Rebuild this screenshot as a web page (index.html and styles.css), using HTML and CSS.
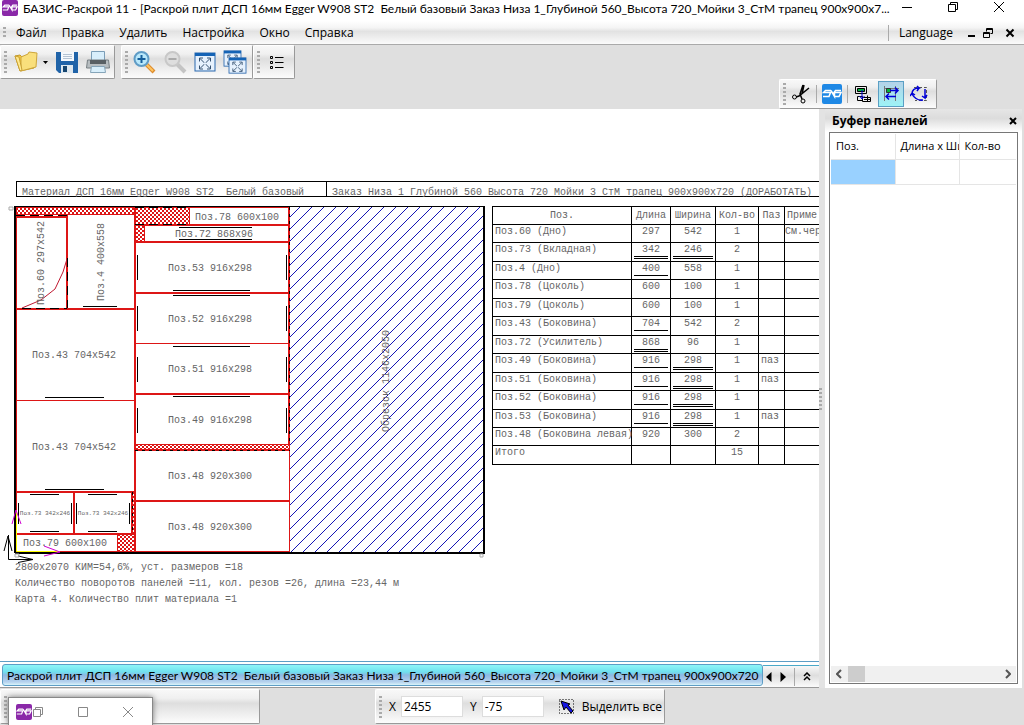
FILE: index.html
```html
<!DOCTYPE html>
<html lang="ru">
<head>
<meta charset="utf-8">
<title>БАЗИС-Раскрой 11</title>
<link rel="stylesheet" href="styles.css">
</head>
<body>
<svg class="defs" aria-hidden="true">
  <symbol id="logo" viewBox="0 0 20 20">
    <path d="M9 6.500H3.500L1.500 8.500H8.500L7 12.500H1M9 6.500l3.500 6V9M19 6.500H13.500L12 8.500H19L17 12.500H12.500" fill="none" stroke="#fff" stroke-width="1.500"/>
  </symbol>
  <symbol id="fit" viewBox="0 0 22 20">
    <rect x="1" y="1" width="20" height="18" fill="#e6f1fd" stroke="#2b68ae"/>
    <rect x="1" y="1" width="20" height="3" fill="#1463b5"/>
    <path d="M6 6.500l10 10M16 6.500l-10 10M5.500 9.500v-3.500h3.500M13 6h3.500v3.500M5.500 13.500v3.500h3.500M13 17h3.500v-3.500" fill="none" stroke="#34506f"/>
    <rect x="10" y="10.500" width="2" height="2" fill="#e6f1fd"/>
  </symbol>
</svg>

<header class="titlebar">
  <svg class="app-logo" viewBox="0 0 20 20"><use href="#logo"/></svg>
  <h1>БАЗИС-Раскрой 11 - [Раскрой плит ДСП 16мм Egger W908 ST2&nbsp; Белый базовый Заказ Низа 1_Глубиной 560_Высота 720_Мойки 3_СтМ трапец 900x900x7...</h1>
  <div class="window-buttons">
    <button aria-label="Свернуть"><svg width="12" height="12"><path d="M1 6.500h10" stroke="#000"/></svg></button>
    <button aria-label="Восстановить"><svg width="12" height="12" fill="none" stroke="#000"><path d="M1.500 3.500h7v7h-7zM3.500 3.500v-2h7v7h-2"/></svg></button>
    <button aria-label="Закрыть"><svg width="12" height="12"><path d="M1 1l10 10M11 1L1 11" stroke="#000"/></svg></button>
  </div>
</header>

<nav class="menubar">
  <span class="grip"></span>
  <button>Файл</button><button>Правка</button><button>Удалить</button><button>Настройка</button><button>Окно</button><button>Справка</button>
  <div class="menu-right">
    <button class="language">Language</button>
    <button class="mdi" aria-label="Свернуть окно"><svg width="10" height="10"><path d="M1 8h7" stroke="#000" stroke-width="2"/></svg></button>
    <button class="mdi" aria-label="Восстановить окно"><svg width="10" height="10" fill="none" stroke="#000"><path d="M.500 4.500h6v5h-6zM.500 5.500h6M3.500 3.500v-3h6v5h-2M3.500 1.500h6"/></svg></button>
    <button class="mdi" aria-label="Закрыть окно"><svg width="10" height="10"><path d="M1.500 1.500l7 7M8.500 1.500l-7 7" stroke="#000" stroke-width="2"/></svg></button>
  </div>
</nav>

<div class="toolbars">
  <div class="tool-row">
    <div class="toolbar">
      <span class="grip"></span>
      <button aria-label="Открыть"><svg width="24" height="24"><path d="M1 6l5-1 2 2 13-4-1 15L6 21z" fill="#f6c73f" stroke="#c39a2b"/><path d="M7 7l7-3 1-2 8 1-1 14L7 21z" fill="#f9df7c" stroke="#cda63c"/><path d="M1 6l4 1 3 13-2 1z" fill="#ffe98e" stroke="#c9a136"/></svg></button>
      <button class="drop" aria-label="Последние файлы"><svg width="5" height="3"><path d="M0 0h5L2.500 3z"/></svg></button>
      <button aria-label="Сохранить"><svg width="24" height="24"><path d="M1 2h22v21H4l-3-3z" fill="#2063a8"/><path d="M6 2h13v9H6z" fill="#f4f8fc"/><path d="M8 4.500h9M8 6.500h9M8 8.500h9" stroke="#b4c3d3"/><path d="M6 15h12v8H6z" fill="#dfe8ef"/><path d="M8 16h4v6H8z" fill="#17466f"/></svg></button>
      <button aria-label="Печать"><svg width="24" height="24"><path d="M5.500 1.500h13v10h-13z" fill="#d8eefb" stroke="#7b9db7"/><path d="M1.500 10h21l1 8H.500z" fill="#b7bdc0" stroke="#777f83"/><path d="M4 10h16v4H4z" fill="#596064"/><path d="M5.500 16.500h13l1 6h-15z" fill="#d9effb" stroke="#86a5b9"/></svg></button>
    </div>
    <div class="toolbar second">
      <span class="grip"></span>
      <button class="zoom-in" aria-label="Увеличить"><svg width="24" height="24"><path d="M14 14l8 8" stroke="#dd8b2d" stroke-width="4"/><path d="M14 14l7 7" stroke="#ffc560" stroke-width="2"/><circle cx="9.500" cy="9" r="7" fill="#b9e8fb" stroke="#5f9cc6" stroke-width="2"/><path d="M9.500 5v8M5.500 9h8" stroke="#155e9b" stroke-width="2"/></svg></button>
      <button aria-label="Уменьшить" disabled><svg width="24" height="24"><path d="M14 14l8 8" stroke="#c4c4c4" stroke-width="4"/><circle cx="9.500" cy="9" r="7" fill="#dedede" stroke="#c8c8c8" stroke-width="2"/><path d="M5.500 9h8" stroke="#aaa" stroke-width="2"/></svg></button>
      <button aria-label="Показать всё"><svg width="22" height="20"><use href="#fit"/></svg></button>
      <button aria-label="Показать все листы"><svg width="24" height="24"><use href="#fit" x="0" y="0" width="19" height="17"/><use href="#fit" x="5" y="7" width="19" height="17"/></svg></button>
    </div>
    <div class="toolbar third">
      <span class="grip"></span>
      <button aria-label="Список"><svg width="14" height="15" fill="none" stroke="#000"><path d="M.500 1.500h2v2h-2zM.500 6.500h2v2h-2zM.500 11.500h2v2h-2zM5 2.500h8.500M5 7.500h8.500M5 12.500h8.500"/></svg></button>
    </div>
  </div>
  <div class="tool-row lower">
    <div class="toolbar small">
      <span class="grip"></span>
      <button aria-label="Вырезать"><svg width="20" height="20" fill="none" stroke="#000"><path d="M12 1L9 10l2 5M18 4L8 12l-3 1M13 1l-2 9" stroke-width="1.500"/><circle cx="3.500" cy="13" r="2"/><circle cx="12" cy="17" r="2"/></svg></button>
      <i></i>
      <button aria-label="Базис"><svg class="blue-logo" viewBox="0 0 20 20"><use href="#logo"/></svg></button>
      <i></i>
      <button aria-label="Поместить в буфер"><svg width="18" height="18" fill="none" stroke="#000"><path d="M1.500 1.500h11v7h-11z"/><path d="M3.500 3.500h7v3h-7z" fill="#00b43c"/><path d="M3.500 11.500h5v4h-5zM8.500 12.500h8v4h-8zM13.500 10.500v6M10 14.500h6"/><path d="M8 5v9M5.500 11l2.500 3 2.500-3" stroke="#0000d8"/></svg></button>
      <button class="active" aria-label="Перемещение"><svg width="18" height="18" fill="none" stroke="#333"><path d="M2.500 1v15M13.500 1v15M3 3.500h14" stroke="#777"/><path d="M4.500 3.500h4v4h-4z" fill="#00b43c"/><path d="M8 5.500h8M13 2.500l3 3-3 3M14 11.500H4M7 8.500l-3 3 3 3" stroke="#0000d8" stroke-width="1.500"/></svg></button>
      <button aria-label="Поворот"><svg width="18" height="18" fill="none"><path d="M4 2.500h12.500v13H5" stroke="#555" stroke-dasharray="3 2"/><path d="M2 9q0-6 7-6l-2-2m2 2L7 6M15 4v9l-3-2m3 2l2-3M13 15q-7 1-11-6M0 11l2-3 3 2" stroke="#0000d8" stroke-width="1.500"/></svg></button>
    </div>
  </div>
</div>

<main class="workspace">
  <section class="document">
    <div class="canvas">
      <div class="sheet-head"><span>Материал ДСП 16мм Egger W908 ST2&nbsp; Белый базовый</span><span>Заказ Низа 1 Глубиной 560 Высота 720 Мойки 3 СтМ трапец 900x900x720 (ДОРАБОТАТЬ)</span></div>
      <div class="drawing">
        <svg class="plan" viewBox="0 206 490 348" width="490" height="348">
          <defs>
            <pattern id="blue" x="3" width="12" height="12" patternUnits="userSpaceOnUse"><path d="M0 12L12 0M-1 1L1-1M11 13L13 11" stroke="#1414b4"/></pattern>
            <pattern id="waste" width="4" height="4" patternUnits="userSpaceOnUse"><path d="M0 0h2v2H0zM2 2h2v2H2z" fill="#dd1616"/></pattern>
          </defs>
          <path d="M290 207h194v346H290z" fill="url(#blue)"/>
          <path d="M16 207h119v7H16zM135 207h54v17H135zM135 225h9v17h-9zM135 445h155v5H135zM132 492h3v42h-3zM117 534h18v18h-18z" fill="url(#waste)"/>
          <g fill="none" stroke="#dd1616" shape-rendering="crispEdges">
            <path d="M16.500 207.500h273v344h-273zM16 214.500h119M189.500 207v17M144.500 225v17M135 343.500h155M16 400.500h119M135 444.500h155M117.500 534v18"/>
            <path stroke-width="2" d="M16 309h119M67 215v94M132 492v42M135 450h155M289 207v238M135 207v345M135 225h155M135 242h155M135 293h155M135 394h155M135 501h155M16 492h119M74 492v42M16 534h119M16 217h51"/>
          </g>
          <path d="M22 308l19-8 14-11 8-17 4-13" fill="none" stroke="#c01830"/>
          <g fill="none" stroke="#000" shape-rendering="crispEdges">
            <path stroke-dasharray="9 5" d="M16 215.500h51M22 308.500h45M67.500 258v50M135 207.500h54M135 224.500h54"/>
            <path stroke-dasharray="3 4" d="M289.500 207v238M135 450.500h155M132.500 492v42"/>
          </g>
          <g fill="none" stroke="#000" shape-rendering="crispEdges">
            <path d="M83 306.500h34M179 227.500h73M179 239.500h73M173 290.500h77M173 295.500h77M173 346.500h77M173 396.500h77M137.500 255v25M286.500 255v25M137.500 306v25M286.500 306v25M137.500 357v25M286.500 357v25M137.500 408v25M286.500 408v25M45 397.500h59M45 489.500h59M30 494.500h29M30 531.500h29M88 494.500h29M88 531.500h29M18.500 503v21M71.500 503v21M76.500 503v21M129.500 503v21"/>
            <path d="M15 206.500h470"/>
            <path stroke-width="2" d="M15 206v347M484 206v348M15 553h470"/>
          </g>
          <path d="M16.500 510v41.500H60" fill="none" stroke="#ff0"/>
          <path d="M12 524l4-14 5 14M44 546l16 6-16 4" fill="none" stroke="#d000d0"/>
          <path d="M8.500 535v24.500H33M4 551l4-15 4 15M18 556l15 3.500-15 3" fill="none" stroke="#000"/>
          <path d="M9 207h4v3H9zM15 554h4v3h-4zM480 554h3v3h-3z" fill="none" stroke="#aaa"/>
          <g class="labels">
            <text x="237" y="220">Поз.78 600x100</text>
            <text x="214" y="237">Поз.72 868x96</text>
            <text x="210" y="271">Поз.53 916x298</text>
            <text x="210" y="322">Поз.52 916x298</text>
            <text x="210" y="372">Поз.51 916x298</text>
            <text x="210" y="423">Поз.49 916x298</text>
            <text x="210" y="479">Поз.48 920x300</text>
            <text x="210" y="530">Поз.48 920x300</text>
            <text x="74" y="358">Поз.43 704x542</text>
            <text x="74" y="450">Поз.43 704x542</text>
            <text x="65" y="546">Поз.79 600x100</text>
            <text transform="translate(44 263) rotate(-90)">Поз.60 297x542</text>
            <text transform="translate(104 262) rotate(-90)">Поз.4 400x558</text>
            <text transform="translate(389 381) rotate(-90)">Обрезок 1146x2050</text>
            <text class="tiny" x="45" y="515">Поз.73 342x246</text>
            <text class="tiny" x="103" y="515">Поз.73 342x246</text>
          </g>
        </svg>
        <table class="parts">
          <colgroup><col class="c-pos"><col class="c-len"><col class="c-wid"><col class="c-qty"><col class="c-groove"><col class="c-note"></colgroup>
          <thead><tr><th>Поз.</th><th>Длина</th><th>Ширина</th><th>Кол-во</th><th>Паз</th><th>Приме</th></tr></thead>
          <tbody>
            <tr><td>Поз.60 (Дно)</td><td>297</td><td>542</td><td>1</td><td></td><td>См.чер</td></tr>
            <tr><td>Поз.73 (Вкладная)</td><td><span class="e2">342</span></td><td><span class="e2">246</span></td><td>2</td><td></td><td></td></tr>
            <tr><td>Поз.4 (Дно)</td><td><span class="e1">400</span></td><td>558</td><td>1</td><td></td><td></td></tr>
            <tr><td>Поз.78 (Цоколь)</td><td>600</td><td>100</td><td>1</td><td></td><td></td></tr>
            <tr><td>Поз.79 (Цоколь)</td><td>600</td><td>100</td><td>1</td><td></td><td></td></tr>
            <tr><td>Поз.43 (Боковина)</td><td><span class="e1">704</span></td><td>542</td><td>2</td><td></td><td></td></tr>
            <tr><td>Поз.72 (Усилитель)</td><td><span class="e2">868</span></td><td>96</td><td>1</td><td></td><td></td></tr>
            <tr><td>Поз.49 (Боковина)</td><td><span class="e1">916</span></td><td><span class="e2">298</span></td><td>1</td><td>паз</td><td></td></tr>
            <tr><td>Поз.51 (Боковина)</td><td><span class="e1">916</span></td><td><span class="e2">298</span></td><td>1</td><td>паз</td><td></td></tr>
            <tr><td>Поз.52 (Боковина)</td><td><span class="e1">916</span></td><td><span class="e2">298</span></td><td>1</td><td></td><td></td></tr>
            <tr><td>Поз.53 (Боковина)</td><td><span class="e1">916</span></td><td><span class="e2">298</span></td><td>1</td><td>паз</td><td></td></tr>
            <tr><td>Поз.48 (Боковина левая)</td><td>920</td><td>300</td><td>2</td><td></td><td></td></tr>
            <tr><td>Итого</td><td></td><td></td><td>15</td><td></td><td></td></tr>
          </tbody>
        </table>
      </div>
      <div class="summary">
        <p>2800x2070 КИМ=54,6%, уст. размеров =18</p>
        <p>Количество поворотов панелей =11, кол. резов =26, длина =23,44 м</p>
        <p>Карта 4. Количество плит материала =1</p>
      </div>
    </div>
    <div class="tabs">
      <button class="tab">Раскрой плит ДСП 16мм Egger W908 ST2&nbsp; Белый базовый Заказ Низа 1_Глубиной 560_Высота 720_Мойки 3_СтМ трапец 900x900x720</button>
      <div class="tab-nav">
        <button aria-label="Назад"><svg width="6" height="10"><path d="M5.500 0v10L0 5z"/></svg></button>
        <button aria-label="Вперёд"><svg width="6" height="10"><path d="M.500 0v10L6 5z"/></svg></button>
        <i></i>
        <button aria-label="Все документы"><svg width="8" height="9" fill="none" stroke="#000" stroke-width="1.500"><path d="M1 4l3-3 3 3M1 8l3-3 3 3"/></svg></button>
      </div>
    </div>
  </section>
  <div class="splitter"><span class="grip"></span></div>
  <aside class="panel">
    <div class="panel-head"><h2>Буфер панелей</h2><button class="mdi" aria-label="Закрыть панель"><svg width="8" height="8"><path d="M1 1l6 6M7 1L1 7" stroke="#000" stroke-width="2"/></svg></button></div>
    <div class="panel-body">
      <table class="buffer">
        <thead><tr><th>Поз.</th><th>Длина x Ши</th><th>Кол-во</th></tr></thead>
        <tbody><tr><td class="selected"></td><td></td><td></td></tr></tbody>
      </table>
      <div class="scrollbar">
        <button aria-label="Влево"><svg width="6" height="10" fill="none" stroke="#555" stroke-width="2"><path d="M5 1L1 5l4 4"/></svg></button>
        <span class="thumb"></span>
        <button aria-label="Вправо"><svg width="6" height="10" fill="none" stroke="#555" stroke-width="2"><path d="M1 1l4 4-4 4"/></svg></button>
      </div>
    </div>
  </aside>
</main>

<footer class="statusbar">
  <div class="toolbar blank"><span class="grip"></span></div>
  <div class="toolbar coords">
    <span class="grip"></span>
    <label for="cx">X</label><input id="cx" value="2455">
    <label for="cy">Y</label><input id="cy" value="-75">
    <button class="select-all"><svg width="17" height="17"><path d="M1.500 1.500h14v14h-14z" fill="none" stroke="#000" stroke-dasharray="1 2"/><path d="M3 3l9 3-2 1 5 6-2 2-5-6-2 3z" fill="#1414e0" stroke="#000"/></svg>Выделить все</button>
  </div>
</footer>

<div class="mini-window">
  <svg class="app-logo" viewBox="0 0 20 20"><use href="#logo"/></svg>
  <button aria-label="Восстановить"><svg width="10" height="10" fill="none" stroke="#888"><path d="M.500 2.500h7v7h-7zM2.500 2.500v-2h7v7h-2"/></svg></button>
  <button aria-label="Развернуть"><svg width="10" height="10" fill="none" stroke="#888"><path d="M.500.500h9v9h-9z"/></svg></button>
  <button aria-label="Закрыть"><svg width="10" height="10" stroke="#888"><path d="M0 0l10 10M10 0L0 10"/></svg></button>
</div>
</body>
</html>
```
FILE: styles.css
```css
* { box-sizing: border-box; }
body {
  margin: 0;
  height: 100vh;
  overflow: hidden;
  display: flex;
  flex-direction: column;
  background: #dfdfdf;
  color: #000;
  font: 12px/16px "Open Sans", "Noto Sans", sans-serif;
}
button {
  display: flex;
  align-items: center;
  justify-content: center;
  flex: none;
  padding: 0;
  border: 0;
  background: none;
  color: inherit;
  font: inherit;
}
h1, h2, p { margin: 0; font: inherit; }
svg { flex: none; }
.defs { position: absolute; width: 0; height: 0; }

.titlebar { display: flex; align-items: flex-start; height: 21px; background: #fff; }
.app-logo { width: 16px; height: 16px; border-radius: 2px; background: #8a28a8; }
.titlebar .app-logo { margin: 0 5px 0 2px; }
.titlebar h1 { flex: 1; min-width: 0; overflow: hidden; white-space: pre; font: 12px/18px Lato, sans-serif; }
.window-buttons { display: flex; gap: 34px; padding: 1px 19px 0 0; }

.menubar {
  display: flex;
  align-items: center;
  height: 24px;
  padding-left: 3px;
  border-bottom: 1px solid #aaa;
  background: linear-gradient(#fff, #f4f4f4 30%, #e2e2e2 45%, #fbfbfb);
}
.grip {
  width: 3px;
  height: 22px;
  flex: none;
  background: repeating-linear-gradient(#aaa 0 2px, transparent 2px 4px);
}
.menubar .grip { height: 12px; }
.menubar button { margin-left: 15px; }
.menubar .grip + button { margin-left: 10px; }
.menu-right { display: flex; align-items: center; margin-left: auto; padding-right: 9px; border-left: 1px solid #aaa; }
.menubar .language { margin: 0 8px 0 10px; }
.menubar .mdi { margin-left: 6px; }
.menubar .mdi:last-child { margin-left: 12px; }

.toolbars { height: 64px; flex: none; }
.tool-row { display: flex; height: 34px; }
.tool-row.lower { height: 30px; justify-content: flex-end; padding-right: 87px; }
.toolbar {
  display: flex;
  align-items: center;
  gap: 7px;
  padding: 0 5px 0 3px;
  border: 1px solid #fff;
  border-right-color: #999;
  border-bottom-color: #999;
  border-radius: 2px;
  background: linear-gradient(#f8f8f8, #f0f0f0 25%, #dedede 40%, #fcfcfc);
}
.tool-row .toolbar { padding-right: 4px; }
.toolbar .drop { margin: 0 0 0 -2px; }
.tool-row .second { margin-left: 6px; padding-right: 5px; }
.zoom-in { margin-left: -3px; }
.tool-row .third { gap: 10px; padding-right: 10px; }
.toolbar.small { gap: 2px; }
.toolbar.small button { width: 26px; height: 26px; }
.toolbar.small i, .tab-nav i { width: 1px; height: 18px; background: #aaa; }
.toolbar.small .active { border: 1px solid #5a9fc4; background: linear-gradient(#b4d2e8, #9df3f6); }
.blue-logo { width: 20px; height: 20px; border-radius: 2px; background: #1e88e5; }

.workspace { flex: 1; display: flex; min-height: 0; }
.document { flex: 1; min-width: 0; display: flex; flex-direction: column; }
.canvas { flex: 1; min-height: 0; overflow: hidden; padding-top: 72px; background: #fff; color: #666; font: 10px/14px "Liberation Mono", monospace; }
.sheet-head { display: flex; margin-left: 16px; height: 16px; border: solid #000; border-width: 1px 0 1px 1px; line-height: 22px; white-space: pre; }
.sheet-head span { padding-left: 5px; }
.sheet-head span:first-child { width: 310px; flex: none; border-right: 1px solid #000; }
.drawing { display: flex; gap: 2px; padding-top: 9px; }
.plan { overflow: visible; }
.labels { fill: #666; font: 10px "Liberation Mono", monospace; text-anchor: middle; }
.labels .tiny { font-size: 6px; }
.parts { align-self: flex-start; width: 353px; height: 259px; flex: none; border-collapse: collapse; table-layout: fixed; }
.parts tr { height: 18px; }
.c-pos { width: 139px; }
.c-len { width: 39px; }
.c-wid { width: 45px; }
.c-qty { width: 43px; }
.c-groove { width: 26px; }
.parts th, .parts td { padding: 0 2px; border: 1px solid #000; font-weight: normal; text-align: center; vertical-align: top; white-space: nowrap; }
.parts td:first-child, .parts td:last-child, .parts td:nth-child(5), .parts th:last-child { text-align: left; }
.parts th { line-height: 17px; }
.parts td:first-child { padding-right: 0; }
.parts td:last-child { padding-left: 0; }
.parts span { display: block; line-height: 13px; }
.e1 { border-bottom: 1px solid #000; }
.e2 { border-bottom: 3px double #000; }
.summary { padding: 6px 15px; line-height: 16px; }

.tabs { display: flex; height: 27px; border-top: 1px solid #5d9dc5; border-bottom: 1px solid #999; background: #fff; }
.tab {
  flex: 1;
  min-width: 0;
  justify-content: flex-start;
  overflow: hidden;
  margin: 2px 0 1px 2px;
  padding: 2px 0 0 4px;
  border: 1px solid #5d9dc5;
  border-radius: 3px;
  background: linear-gradient(#8ff6f8, #6fe0ee 35%, #8cb8e2 50%, #b6d2ee 85%, #d8f4fa);
  white-space: pre;
  font: 12px/16px Lato, sans-serif;
}
.tab-nav { display: flex; align-items: center; gap: 8px; margin-top: 3px; padding: 0 8px 0 3px; border-top: 1px solid #4aa9c8; background: linear-gradient(#f8f8f8, #dedede 45%, #fbfbfb); }
.splitter { display: flex; align-items: center; width: 6px; background: #e3e3e3; }
.panel { display: flex; flex-direction: column; width: 197px; margin-right: 2px; padding: 0 4px 4px 4px; background: #fff; }
.panel-head { display: flex; align-items: center; justify-content: space-between; height: 23px; margin: 0 -4px; padding: 0 5px 0 7px; background: linear-gradient(#e6e6e6, #dcdcdc 40%, #fff); }
.panel-head h2 { font-weight: bold; font-size: 12px; }
.panel-body { flex: 1; display: flex; flex-direction: column; justify-content: space-between; border: 1px solid #777; padding: 1px; }
.buffer { width: 100%; border-collapse: collapse; table-layout: fixed; font-size: 11px; }
.buffer th, .buffer td { height: 25px; padding: 0 0 0 5px; border: solid #e5e5e5; border-width: 0 1px 1px 0; font-weight: normal; text-align: left; white-space: nowrap; overflow: hidden; }
.buffer th:last-child, .buffer td:last-child { width: 57px; border-right: 0; }
.buffer .selected { background: #99d1ff; }
.scrollbar { display: flex; align-items: center; height: 16px; padding: 0 5px; background: #f0f0f0; }
.thumb { width: 17px; height: 16px; margin-left: 6px; background: #cdcdcd; }
.scrollbar button:last-child { margin-left: auto; }

.statusbar { display: flex; align-items: flex-start; height: 37px; padding-top: 1px; flex: none; }
.statusbar .toolbar { height: 35px; }
.blank { width: 260px; }
.statusbar .coords { gap: 6px; margin-left: 115px; padding-right: 2px; }
.coords label { margin-left: 1px; }
.coords input { width: 62px; height: 21px; margin-left: -1px; padding: 0 2px; border: 1px solid #ddd; background: #fff; font: inherit; }
.select-all { gap: 7px; margin-left: 8px; }

.mini-window {
  position: absolute;
  left: 8px;
  bottom: 0;
  display: flex;
  align-items: center;
  width: 145px;
  height: 28px;
  padding-left: 7px;
  border: 1px solid #888;
  border-bottom: 0;
  background: #fff;
  box-shadow: 0 0 6px #777;
}
.mini-window button { margin-left: 35px; }
.mini-window .app-logo + button { margin-left: 1px; }
```
